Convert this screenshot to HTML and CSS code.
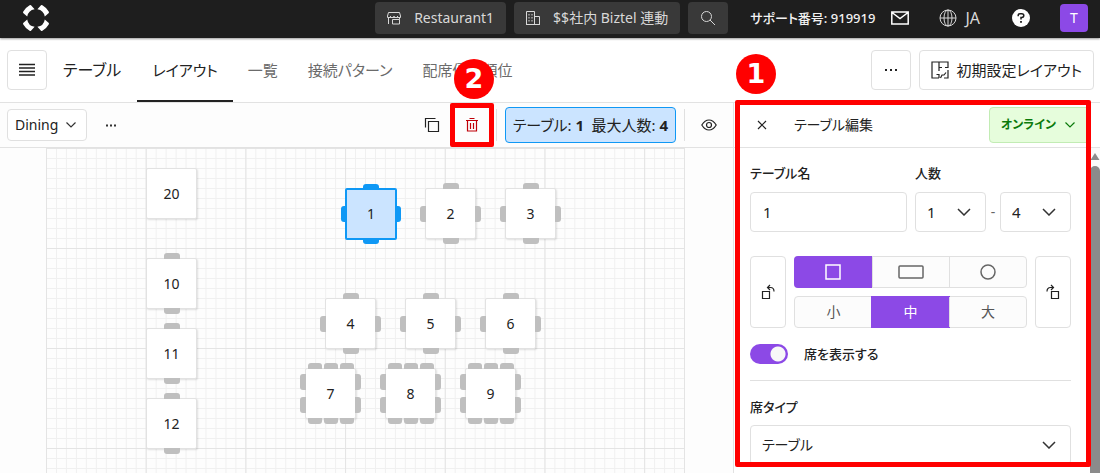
FILE: index.html
```html
<!DOCTYPE html>
<html lang="ja">
<head>
<meta charset="utf-8">
<meta name="viewport" content="width=device-width, initial-scale=1">
<title>テーブル</title>
<link rel="stylesheet" href="styles.css">
</head>
<body>
<header class="topbar">
  <a class="logo" href="#" aria-label="ホーム">
    <svg width="28" height="28" viewBox="0 0 28 28"><g fill="#fff"><path id="petal" d="M5.200 12.600L1.200 9Q.8 8.300 1.300 7.600 3.600 3.600 7.600 1.300 8.300.8 9 1.200L12.600 5.200A9 9 0 0 0 5.200 12.600z"/><use href="#petal" transform="rotate(90 14 14)"/><use href="#petal" transform="rotate(180 14 14)"/><use href="#petal" transform="rotate(270 14 14)"/></g></svg>
  </a>
  <div class="venue">
    <button class="dark-btn"><svg class="ic" width="14" height="14" viewBox="0 0 14 14"><path d="M1.500 1.500h11l1 3.500v1.500h-3V5v1.500H7V5v1.500H3.500V5v1.500h-3V5zM1.500 6.500v6.500M5.500 13V8.500h7V13zM12.500 6.500v2"/></svg>Restaurant1</button>
    <button class="dark-btn"><svg class="ic" width="14" height="14" viewBox="0 0 14 14"><path d="M.5 13.500V.5h8v13M8.500 5.500h5v8M0 13.500h14M3 3v1.500M6 3v1.500M3 6v1.500M6 6v1.500M3 9v1.500M6 9v1.500"/></svg>$$社内 Biztel 連動</button>
    <button class="dark-btn search" aria-label="検索"><svg class="ic" width="16" height="16" viewBox="0 0 16 16"><circle cx="6.500" cy="6.500" r="5"/><path d="M10 10l5 5"/></svg></button>
  </div>
  <span class="support">サポート番号: 919919</span>
  <button class="bar-icon mail" aria-label="メール"><svg class="ic bright" width="18" height="14" viewBox="0 0 18 14"><path d="M.8 1h16.400v12H.8zM1 1.500l8 6 8-6"/></svg></button>
  <button class="bar-icon lang"><svg class="ic" width="18" height="18" viewBox="0 0 18 18"><circle cx="9" cy="9" r="8"/><ellipse cx="9" cy="9" rx="4" ry="8"/><path d="M9 1v16M1 9h16"/></svg>JA</button>
  <button class="bar-icon help" aria-label="ヘルプ"><svg width="18" height="18" viewBox="0 0 18 18"><circle cx="9" cy="9" r="9" fill="#fff"/><path d="M6.200 7.200V6.500q0-1.700 1.800-1.700h1.800q2 0 2 1.800t-2 1.800H9v2" fill="none" stroke="#1e1e1e" stroke-width="1.500"/><rect x="8.100" y="12" width="1.800" height="1.800" fill="#1e1e1e"/></svg></button>
  <button class="avatar">T</button>
</header>

<div class="pagebar">
  <button class="box-btn square" aria-label="メニュー"><svg width="16" height="14" viewBox="0 0 16 14"><path d="M0 1.500h16M0 5h16M0 8.500h16M0 12h16" stroke="#222" stroke-width="1.300"/></svg></button>
  <h1>テーブル</h1>
  <nav class="tabs">
    <a class="active" href="#">レイアウト</a>
    <a href="#">一覧</a>
    <a href="#">接続パターン</a>
    <a href="#">配席優先順位</a>
  </nav>
  <button class="box-btn square more" aria-label="その他"><svg width="14" height="4" viewBox="0 0 14 4"><path d="M1 1h2v2H1zM6 1h2v2H6zM11 1h2v2h-2z" fill="#222"/></svg></button>
  <button class="box-btn"><svg class="ic ink" width="18" height="18" viewBox="0 0 18 18"><path d="M8 17H1V1h16v5.500h-3M8 1v9M8 6.500h3M5.500 13.500H8V17M17 9v8h-4M9.500 17l1.500-3h2l2-2.500"/></svg>初期設定レイアウト</button>
</div>

<main class="work">
  <section class="editor">
    <div class="toolbar">
      <div class="pick area">
        <select aria-label="エリア"><option>Dining</option></select>
        <svg class="chev" width="10" height="6" viewBox="0 0 10 6"><path d="M.5.5L5 5 9.500.5"/></svg>
      </div>
      <button class="tool dots" aria-label="その他"><svg width="12" height="3" viewBox="0 0 12 3"><path d="M1 .5h2v2H1zM5 .5h2v2H5zM9 .5h2v2H9z" fill="#333"/></svg></button>
      <button class="tool copy" aria-label="複製"><svg class="ic ink" width="16" height="16" viewBox="0 0 16 16"><path d="M4.500 4.500h10v10h-10zM1.500 10.500v-9h10"/></svg></button>
      <div class="trash">
        <button class="tool" aria-label="削除"><svg class="ic danger" width="14" height="16" viewBox="0 0 14 16"><path d="M1 3.500h12M4.500 1.500h5M2.500 3.500v10.500h9V3.500M5.500 6v6M8.500 6v6"/></svg></button>
        <span class="frame"></span><span class="step">2</span>
      </div>
      <span class="rule"></span>
      <div class="summary">テーブル: <b>1</b>&ensp;最大人数: <b>4</b></div>
      <span class="rule"></span>
      <button class="tool eye" aria-label="表示"><svg class="ic ink" width="16" height="12" viewBox="0 0 16 12"><path d="M.8 6q3-5 7.200-5t7.200 5q-3 5-7.200 5T.8 6z"/><circle cx="8" cy="6" r="2.500"/></svg></button>
    </div>
    <div class="canvas"><div class="floor" id="floor"></div></div>
  </section>

  <aside class="panel">
    <div class="panel-head">
      <button class="tool" aria-label="閉じる"><svg class="ic ink" width="10" height="10" viewBox="0 0 10 10"><path d="M1 1l8 8M9 1L1 9"/></svg></button>
      <h2>テーブル編集</h2>
      <button class="online">オンライン<svg class="chev" width="10" height="6" viewBox="0 0 10 6"><path d="M.5.5L5 5 9.500.5"/></svg></button>
    </div>
    <div class="panel-body">
      <form class="form">
        <div class="fields">
          <div class="field name"><label for="name">テーブル名</label><input class="text" id="name" type="text" value="1"></div>
          <div class="field">
            <label for="min">人数</label>
            <div class="range">
              <div class="pick"><select id="min"><option>1</option></select><svg class="chev" width="14" height="8" viewBox="0 0 14 8"><path d="M1 1l6 6 6-6"/></svg></div>
              <span>-</span>
              <div class="pick"><select aria-label="最大人数"><option>4</option></select><svg class="chev" width="14" height="8" viewBox="0 0 14 8"><path d="M1 1l6 6 6-6"/></svg></div>
            </div>
          </div>
        </div>
        <div class="shape">
          <button type="button" class="box-btn turn" aria-label="左に回転"><svg class="ic ink" width="14" height="16" viewBox="0 0 14 16"><path d="M1.500 7.500h7v7h-7zM9 1L6.500 3.500 9 6M6.500 3.500h3q3.500 0 3.500 4"/></svg></button>
          <div class="groups">
            <div class="seg">
              <button type="button" class="on" aria-label="正方形"><svg width="16" height="16" viewBox="0 0 16 16"><path d="M1 1h14v14H1z"/></svg></button>
              <button type="button" aria-label="長方形"><svg width="26" height="14" viewBox="0 0 26 14"><rect x="1" y="1" width="24" height="12" rx="1"/></svg></button>
              <button type="button" aria-label="円"><svg width="16" height="16" viewBox="0 0 16 16"><circle cx="8" cy="8" r="7"/></svg></button>
            </div>
            <div class="seg">
              <button type="button">小</button>
              <button type="button" class="on">中</button>
              <button type="button">大</button>
            </div>
          </div>
          <button type="button" class="box-btn turn" aria-label="右に回転"><svg class="ic ink" width="14" height="16" viewBox="0 0 14 16"><path d="M5.500 7.500h7v7h-7zM5 1l2.500 2.500L5 6M7.500 3.500h-3Q1 3.500 1 7.500"/></svg></button>
        </div>
        <label class="switch"><input type="checkbox" checked>席を表示する</label>
        <div class="field type">
          <label for="type">席タイプ</label>
          <div class="pick"><select id="type"><option>テーブル</option></select><svg class="chev" width="14" height="8" viewBox="0 0 14 8"><path d="M1 1l6 6 6-6"/></svg></div>
        </div>
      </form>
      <div class="scroll"><svg width="10" height="7" viewBox="0 0 10 7"><path d="M5 0l4.500 7h-9z" fill="#8b8b8b"/></svg><span></span></div>
    </div>
    <span class="frame"></span><span class="step">1</span>
  </aside>
</main>
<script src="floor.js"></script>
</body>
</html>
```
FILE: styles.css
```css
* { box-sizing: border-box; }
body {
  margin: 0;
  height: 100vh;
  overflow: hidden;
  display: flex;
  flex-direction: column;
  font: 14px/20px "Noto Sans", "Noto Sans CJK JP", sans-serif;
  font-feature-settings: "palt";
  color: #222;
  background: #fff;
  white-space: nowrap;
}
button, input, select {
  font: inherit;
  font-feature-settings: inherit;
  color: inherit;
  margin: 0;
  padding: 0;
  border: 0;
  background: none;
}
svg { display: block; flex: none; }
h1, h2 { margin: 0; font-weight: 400; }
.ic { fill: none; stroke: #d8d8d8; stroke-width: 1; }
.bright { stroke: #fff; stroke-width: 1.5; }
.ink { stroke: #222; stroke-width: 1.2; }
.danger { stroke: #c00008; stroke-width: 1.2; }
.chev { fill: none; stroke: #333; stroke-width: 1.2; }

.topbar {
  flex: none;
  height: 38px;
  padding: 0 12px 2px 22px;
  display: flex;
  align-items: center;
  background: #1e1e1e;
  color: #d8d8d8;
  box-shadow: 0 1px 2px rgba(0, 0, 0, .4);
  position: relative;
}
.venue { display: flex; gap: 8px; margin-left: auto; }
.dark-btn {
  height: 32px;
  padding: 0 12px;
  display: flex;
  align-items: center;
  justify-content: center;
  gap: 13px;
  border-radius: 4px;
  background: #393939;
}
.search { width: 40px; padding: 0; }
.support { margin-left: 22px; font-size: 13px; font-weight: 500; color: #f2f2f2; }
.bar-icon { display: flex; align-items: center; gap: 8px; }
.mail { margin-left: 16px; }
.lang { margin-left: 30px; font-size: 16px; }
.help { margin-left: 32px; }
.avatar {
  width: 28px;
  height: 28px;
  margin-left: 30px;
  border-radius: 4px;
  background: #8c49e6;
  color: #fff;
}

.pagebar {
  flex: none;
  height: 65px;
  padding: 0 6px 0 7px;
  display: flex;
  align-items: center;
  border-bottom: 1px solid #e2e2e2;
}
h1 { margin: 0 16px; font-size: 16px; line-height: 24px; }
.tabs { align-self: stretch; display: flex; margin-right: auto; }
.tabs a {
  padding: 0 15px;
  display: flex;
  align-items: center;
  border-bottom: 2px solid transparent;
  border-top: 2px solid transparent;
  color: #6b6b6b;
  font-size: 15px;
  text-decoration: none;
}
.tabs .active { color: #222; border-bottom-color: #222; }
.box-btn {
  height: 40px;
  padding: 0 11px;
  display: flex;
  align-items: center;
  justify-content: center;
  gap: 8px;
  border: 1px solid #e0e0e0;
  border-radius: 4px;
  background: #fff;
  font-size: 15px;
}
.square { width: 40px; padding: 0; }
.more { margin-right: 8px; }

.work { flex: 1; min-height: 0; display: flex; }
.editor { flex: 1; min-width: 0; display: flex; flex-direction: column; background: #fdfdfd; }
.toolbar {
  flex: none;
  height: 45px;
  padding: 0 8px 0 7px;
  display: flex;
  align-items: center;
  border-bottom: 1px solid #e2e2e2;
}
.pick { display: grid; align-items: center; }
.pick select, .pick .chev { grid-area: 1 / 1; }
.pick select {
  appearance: none;
  width: 100%;
  height: 40px;
  padding: 0 11px;
  border: 1px solid #e0e0e0;
  border-radius: 4px;
  background: #fff;
}
.pick .chev { justify-self: end; margin-right: 15px; pointer-events: none; stroke-width: 1.5; }
.area { width: 80px; }
.area select { height: 32px; padding: 0 7px; }
.area .chev { margin-right: 11px; stroke-width: 1.2; }
.tool { width: 32px; height: 32px; display: grid; place-items: center; }
.dots { margin-left: 8px; margin-right: auto; }
.trash { position: relative; margin: 0 8px; }
.rule { width: 1px; height: 32px; background: #e0e0e0; }
.summary {
  height: 36px;
  margin: 0 8px;
  padding: 0 7px;
  border: 1px solid #0f98f5;
  border-radius: 4px;
  background: #cbe4ff;
  font-size: 15px;
  line-height: 34px;
}
.eye { margin-left: 8px; }

.canvas { flex: 1; min-height: 0; overflow: hidden; display: flex; justify-content: center; padding-right: 2px; }
.floor {
  flex: none;
  position: relative;
  width: 639px;
  height: 500px;
  border-right: 1px solid #e4e4e4;
  background-image:
    linear-gradient(90deg, #e4e4e4 1px, transparent 1px),
    linear-gradient(#e4e4e4 1px, transparent 1px),
    linear-gradient(90deg, #f0f0f0 1px, transparent 1px),
    linear-gradient(#f0f0f0 1px, transparent 1px);
  background-size: calc(100% / 6.4) 100%, 100% 100px, calc(100% / 64) 100%, 100% 10px;
}
.table {
  position: absolute;
  width: 51px;
  height: 51px;
  display: grid;
  place-items: center;
  border: 1px solid #e2e2e2;
  border-radius: 2px;
  background: #fff;
  box-shadow: 1px 1px 2px rgba(0, 0, 0, .12);
}
.chairs { position: absolute; display: flex; justify-content: center; gap: 2px; }
.chairs i { width: 16px; height: 6px; background: #bfbfbf; }
.north, .south { left: 0; right: 0; }
.north { bottom: 100%; }
.south { top: 100%; }
.west, .east { top: 0; bottom: 0; flex-direction: column; gap: 7px; }
.west { right: 100%; }
.east { left: 100%; }
.west i, .east i { width: 6px; height: 16px; }
.north i { border-radius: 3px 3px 0 0; }
.south i { border-radius: 0 0 3px 3px; }
.west i { border-radius: 3px 0 0 3px; }
.east i { border-radius: 0 3px 3px 0; }
.six .north i, .six .south i { width: 14px; }
.selected { width: 52px; height: 52px; border: 2px solid #0f98f5; background: #cbe4ff; box-shadow: none; }
.selected i { background: #0f98f5; }

.panel {
  position: relative;
  flex: none;
  width: 367px;
  display: flex;
  flex-direction: column;
  border-left: 1px solid #e2e2e2;
}
.panel-head {
  flex: none;
  height: 45px;
  padding: 0 10px 0 12px;
  display: flex;
  align-items: center;
  border-bottom: 1px solid #e2e2e2;
}
h2 { margin: 0 auto 0 16px; font-size: 14px; line-height: 20px; }
.online {
  height: 36px;
  padding: 0 14px 0 11px;
  display: flex;
  align-items: center;
  gap: 9px;
  border: 1px solid #c2ecb4;
  border-radius: 4px;
  background: #e6fddc;
  color: #0b7a0b;
  font-weight: 600;
  font-size: 12px;
}
.online .chev { stroke: #0b7a0b; }
.panel-body { flex: 1; min-height: 0; display: flex; overflow: hidden; }
.form { flex: 1; padding: 15px 19px 0 16px; }
.fields { display: flex; gap: 8px; }
.field label { display: block; margin-bottom: 9px; font-size: 13px; font-weight: 500; }
.name { flex: 1; min-width: 0; }
.text {
  width: 100%;
  height: 40px;
  padding: 0 12px;
  border: 1px solid #e0e0e0;
  border-radius: 4px;
  background: #fff;
}
.text, .range select { font-size: 15px; }
.range { display: flex; align-items: center; }
.range .pick { width: 71px; }
.range span { width: 14px; text-align: center; color: #666; }
.shape { display: flex; gap: 8px; margin-top: 24px; }
.turn { width: 36px; height: 72px; padding: 0; }
.groups { flex: 1; display: grid; gap: 8px; }
.seg {
  display: grid;
  grid-template-columns: repeat(3, 1fr);
  height: 32px;
  border: 1px solid #e0e0e0;
  border-radius: 4px;
  background: #fcfcfc;
}
.seg button { display: grid; place-items: center; color: #555; }
.seg button + button { border-left: 1px solid #e0e0e0; }
.seg svg { fill: none; stroke: #666; stroke-width: 1.5; }
.seg .on, .seg button + .on { margin: -1px; border: 0; background: #8c49e6; color: #fff; }
.seg .on:first-child { margin-right: 0; border-radius: 4px 0 0 4px; }
.seg .on svg { stroke: #fff; }
.switch { display: flex; align-items: center; gap: 16px; height: 20px; margin-top: 16px; font-size: 13px; font-weight: 500; }
.switch input {
  appearance: none;
  width: 38px;
  height: 20px;
  border-radius: 10px;
  background: radial-gradient(circle at 28px 10px, #f8f8f8 7px, #8c49e6 8px);
}
.type { margin-top: 16px; padding-top: 16px; border-top: 1px solid #e0e0e0; }
.type label { margin-bottom: 8px; }
.scroll { width: 10px; padding-top: 5px; display: flex; flex-direction: column; gap: 6px; background: #fafafa; }
.scroll span { flex: 1; border-radius: 5px 5px 0 0; background: #8b8b8b; }

.frame { position: absolute; border: 5px solid #f00; border-radius: 2px; pointer-events: none; }
.step {
  position: absolute;
  width: 40px;
  height: 40px;
  border-radius: 50%;
  background: #f00;
  color: #fff;
  font: bold 27px/40px "DejaVu Sans", sans-serif;
  text-align: center;
}
.panel .frame { top: -3px; right: 9px; bottom: 6px; left: 1px; }
.panel .step { top: -49px; left: 2px; }
.trash .frame { top: -6px; right: -6px; bottom: -6px; left: -6px; }
.trash .step { top: -50px; left: -2px; }
```
FILE: floor.js
```js
// Table name, position on the floor, and seats on the horizontal and vertical sides.
const tables = [
  ["20", 100, 20, 0, 0],
  ["10", 100, 110, 1, 0],
  ["11", 100, 180, 1, 0],
  ["12", 100, 250, 1, 0],
  ["1", 299, 40, 1, 1],
  ["2", 379, 40, 1, 1],
  ["3", 459, 40, 1, 1],
  ["4", 279, 150, 1, 1],
  ["5", 359, 150, 1, 1],
  ["6", 439, 150, 1, 1],
  ["7", 259, 220, 3, 2],
  ["8", 339, 220, 3, 2],
  ["9", 419, 220, 3, 2]
];
const chairs = (side, count) => `<span class="chairs ${side}">${"<i></i>".repeat(count)}</span>`;
document.getElementById("floor").innerHTML = tables.map(([name, x, y, h, v]) =>
  `<div class="table${h === 3 ? " six" : ""}${name === "1" ? " selected" : ""}" style="left:${x}px;top:${y}px">` +
  `${name}${chairs("north", h)}${chairs("south", h)}${chairs("west", v)}${chairs("east", v)}</div>`
).join("");
```
